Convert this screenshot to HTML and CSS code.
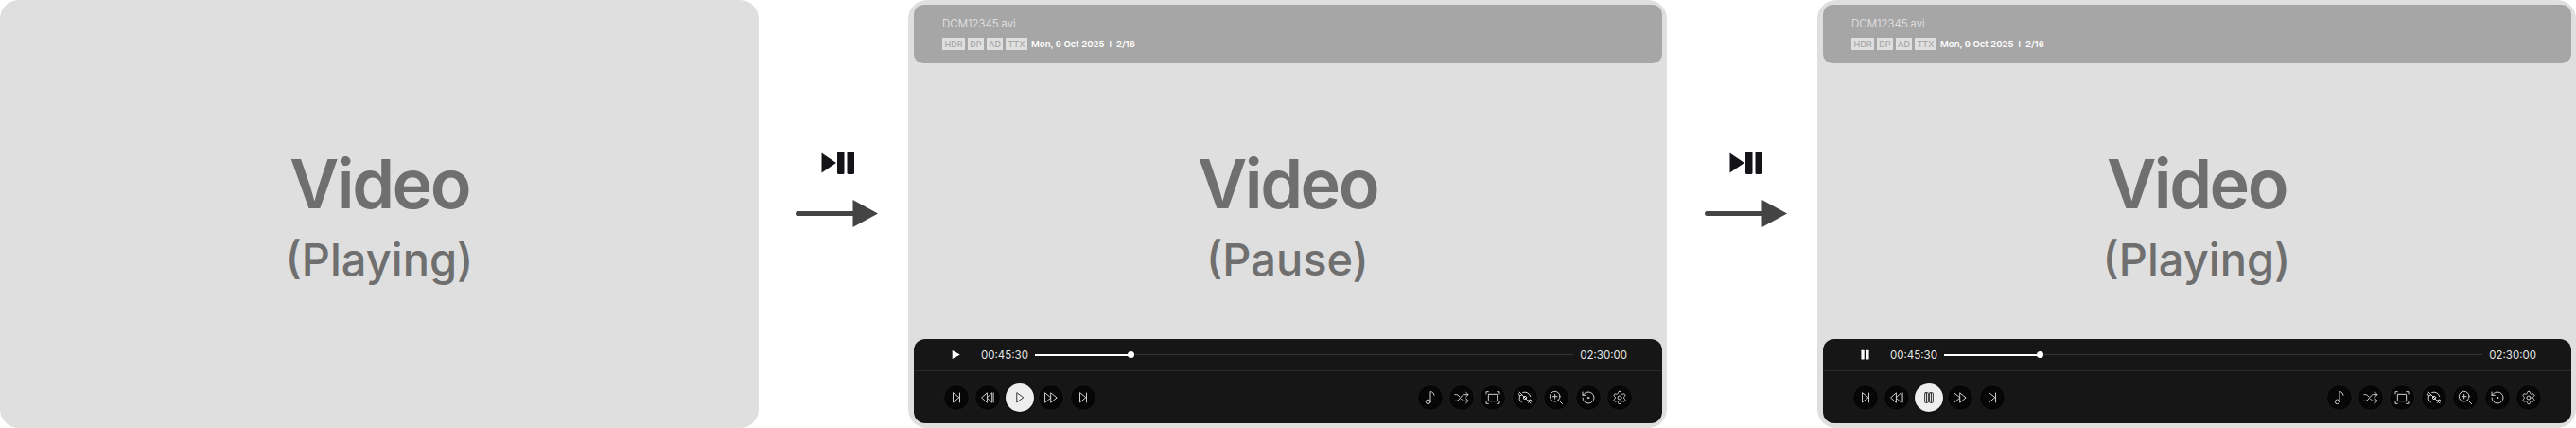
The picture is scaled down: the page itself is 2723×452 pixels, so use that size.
FILE: index.html
```html
<!DOCTYPE html>
<html lang="en">
<head>
<meta charset="utf-8">
<title>Video player states</title>
<link rel="stylesheet" href="styles.css">
</head>
<body>
<svg class="defs" width="0" height="0" aria-hidden="true">
  <symbol id="i-skip" viewBox="0 0 24 24"><path d="M6 3.500v17L16.500 12zM18 3.500v17"/></symbol>
  <symbol id="i-rew" viewBox="0 0 24 24"><path d="M10.500 3.500 1 12l9.500 8.500zM19.500 3.500 10.500 12l9 8.500zM22.500 3.500v17"/></symbol>
  <symbol id="i-fwd" viewBox="0 0 24 24"><path d="M1.500 3.500 12 12 1.500 20.500zM12 3.500 22.500 12 12 20.500z"/></symbol>
  <symbol id="i-play" viewBox="0 0 24 24"><path d="M6.500 3.500v17L18 12z"/></symbol>
  <symbol id="i-pause" viewBox="0 0 24 24"><rect x="4.500" y="3" width="6.500" height="18" rx="1"/><rect x="13" y="3" width="6.500" height="18" rx="1"/><path d="M7.750 3v18M16.250 3v18"/></symbol>
  <symbol id="i-music" viewBox="0 0 24 24"><circle cx="8.500" cy="18.500" r="3.500"/><path d="M12 18.500V2.500c3.500 0 5.500 2.200 6 5.500"/></symbol>
  <symbol id="i-shuffle" viewBox="0 0 24 24"><path d="m19 13.500 3.500 3.500-3.500 3.500M19 3.500 22.500 7 19 10.500M1.500 17h2.500a4 4 0 0 0 3.300-1.700l5.400-6.600A4 4 0 0 1 16 7h6.500M1.500 7H4a4 4 0 0 1 3.300 1.700l1.200 1.500M22.500 17H16a4 4 0 0 1-3.300-1.700l-1.200-1.500"/></symbol>
  <symbol id="i-fit" viewBox="0 0 24 24"><path d="M1.500 6V2.500H5M19 2.500h3.500V6M22.500 18v3.500H19M5 21.500H1.500V18"/><rect x="5" y="6.500" width="14" height="11" rx="1"/></symbol>
  <symbol id="i-rotoff" viewBox="0 0 24 24"><path d="M3 3l18 18M3.500 9a9 9 0 0 0 3 10.500M8.500 3.700A9 9 0 0 1 20.700 10M21 15.500a9 9 0 0 1-4 4.500M2 5.500 3.500 9 7 7.500M22 18.500 21 15l-3.500 1"/><circle cx="12" cy="12" r="2.500"/></symbol>
  <symbol id="i-zoom" viewBox="0 0 24 24"><circle cx="10" cy="10" r="8"/><path d="m22 22-6.300-6.300M10 6.500v7M6.500 10h7"/></symbol>
  <symbol id="i-reset" viewBox="0 0 24 24"><path d="M3 12a9 9 0 1 0 9-9 9.750 9.750 0 0 0-6.740 2.740L3 8M3 3v5h5"/><circle cx="12" cy="12" r="1.200"/></symbol>
  <symbol id="i-gear" viewBox="0 0 24 24"><path d="M12.220 2h-.44a2 2 0 0 0-2 2v.18a2 2 0 0 1-1 1.730l-.43.250a2 2 0 0 1-2 0l-.15-.08a2 2 0 0 0-2.730.730l-.22.380a2 2 0 0 0 .730 2.730l.15.100a2 2 0 0 1 1 1.720v.510a2 2 0 0 1-1 1.740l-.15.090a2 2 0 0 0-.730 2.730l.22.380a2 2 0 0 0 2.730.730l.15-.08a2 2 0 0 1 2 0l.43.250a2 2 0 0 1 1 1.730V20a2 2 0 0 0 2 2h.44a2 2 0 0 0 2-2v-.18a2 2 0 0 1 1-1.730l.43-.250a2 2 0 0 1 2 0l.15.08a2 2 0 0 0 2.730-.730l.22-.390a2 2 0 0 0-.730-2.730l-.15-.08a2 2 0 0 1-1-1.740v-.5a2 2 0 0 1 1-1.740l.15-.090a2 2 0 0 0 .730-2.730l-.22-.380a2 2 0 0 0-2.730-.730l-.15.08a2 2 0 0 1-2 0l-.43-.250a2 2 0 0 1-1-1.730V4a2 2 0 0 0-2-2z"/><circle cx="12" cy="12" r="3"/></symbol>
</svg>

<main class="board">
  <section class="panel">
    <div class="stage"><div class="stage-title">Video</div><div class="stage-state">(Playing)</div></div>
  </section>

  <div class="step step-first">
    <svg class="step-icon" viewBox="0 0 36 24"><path d="M1.500 1.500v21L17 12z"/><rect x="18" width="7.500" height="24" rx="1.500"/><rect x="28.500" width="7.500" height="24" rx="1.500"/></svg>
    <svg class="step-arrow" viewBox="0 0 87 29"><path d="M2.500 12h58V0L87 14.500 60.500 29V17h-58a2.500 2.500 0 0 1 0-5z"/></svg>
  </div>

  <section class="panel">
    <div class="stage"><div class="stage-title">Video</div><div class="stage-state">(Pause)</div></div>
    <header class="info">
      <div class="info-name">DCM12345.avi</div>
      <div class="info-meta">
        <span class="tag tag-hdr">HDR</span><span class="tag">DP</span><span class="tag">AD</span><span class="tag tag-ttx">TTX</span>
        <span class="info-text">Mon, 9 Oct 2025</span><span class="info-sep">I</span><span class="info-text">2/16</span>
      </div>
    </header>
    <footer class="bar">
      <div class="bar-top">
        <svg class="mini-icon" viewBox="0 0 24 24"><path d="M5 3.500v17L20 12z"/></svg>
        <span class="time">00:45:30</span>
        <div class="track"><div class="track-fill"></div><div class="track-knob"></div></div>
        <span class="time">02:30:00</span>
      </div>
      <div class="bar-bottom">
        <div class="btns">
          <span class="btn"><svg><use href="#i-skip"/></svg></span>
          <span class="btn"><svg><use href="#i-rew"/></svg></span>
          <span class="btn btn-main"><svg><use href="#i-play"/></svg></span>
          <span class="btn"><svg><use href="#i-fwd"/></svg></span>
          <span class="btn"><svg><use href="#i-skip"/></svg></span>
        </div>
        <div class="btns btns-tools">
          <span class="btn"><svg><use href="#i-music"/></svg></span>
          <span class="btn"><svg><use href="#i-shuffle"/></svg></span>
          <span class="btn"><svg><use href="#i-fit"/></svg></span>
          <span class="btn"><svg><use href="#i-rotoff"/></svg></span>
          <span class="btn"><svg><use href="#i-zoom"/></svg></span>
          <span class="btn"><svg><use href="#i-reset"/></svg></span>
          <span class="btn"><svg><use href="#i-gear"/></svg></span>
        </div>
      </div>
    </footer>
  </section>

  <div class="step">
    <svg class="step-icon" viewBox="0 0 36 24"><path d="M1.500 1.500v21L17 12z"/><rect x="18" width="7.500" height="24" rx="1.500"/><rect x="28.500" width="7.500" height="24" rx="1.500"/></svg>
    <svg class="step-arrow" viewBox="0 0 87 29"><path d="M2.500 12h58V0L87 14.500 60.500 29V17h-58a2.500 2.500 0 0 1 0-5z"/></svg>
  </div>

  <section class="panel">
    <div class="stage"><div class="stage-title">Video</div><div class="stage-state">(Playing)</div></div>
    <header class="info">
      <div class="info-name">DCM12345.avi</div>
      <div class="info-meta">
        <span class="tag tag-hdr">HDR</span><span class="tag">DP</span><span class="tag">AD</span><span class="tag tag-ttx">TTX</span>
        <span class="info-text">Mon, 9 Oct 2025</span><span class="info-sep">I</span><span class="info-text">2/16</span>
      </div>
    </header>
    <footer class="bar">
      <div class="bar-top">
        <svg class="mini-icon" viewBox="0 0 24 24"><rect x="4.500" y="3" width="6" height="18" rx="1"/><rect x="13.500" y="3" width="6" height="18" rx="1"/></svg>
        <span class="time">00:45:30</span>
        <div class="track"><div class="track-fill"></div><div class="track-knob"></div></div>
        <span class="time">02:30:00</span>
      </div>
      <div class="bar-bottom">
        <div class="btns">
          <span class="btn"><svg><use href="#i-skip"/></svg></span>
          <span class="btn"><svg><use href="#i-rew"/></svg></span>
          <span class="btn btn-main"><svg><use href="#i-pause"/></svg></span>
          <span class="btn"><svg><use href="#i-fwd"/></svg></span>
          <span class="btn"><svg><use href="#i-skip"/></svg></span>
        </div>
        <div class="btns btns-tools">
          <span class="btn"><svg><use href="#i-music"/></svg></span>
          <span class="btn"><svg><use href="#i-shuffle"/></svg></span>
          <span class="btn"><svg><use href="#i-fit"/></svg></span>
          <span class="btn"><svg><use href="#i-rotoff"/></svg></span>
          <span class="btn"><svg><use href="#i-zoom"/></svg></span>
          <span class="btn"><svg><use href="#i-reset"/></svg></span>
          <span class="btn"><svg><use href="#i-gear"/></svg></span>
        </div>
      </div>
    </footer>
  </section>
</main>
</body>
</html>
```

FILE: styles.css
```css
* { box-sizing: border-box; }
html, body { margin: 0; padding: 0; background: #fff; }
body { width: 2723px; height: 452px; overflow: hidden; font-family: Inter, "Liberation Sans", sans-serif; }
.defs { position: absolute; }
.board { display: flex; height: 452px; }

.panel {
  position: relative;
  flex: 0 0 802px;
  height: 452px;
  background: #dfdfdf;
  border-radius: 20px;
  display: flex;
  align-items: center;
  justify-content: center;
}
.stage { padding-top: 4px; text-align: center; color: #6f6f6f; }
.stage-title { font-size: 72px; line-height: 80px; font-weight: 600; letter-spacing: -2.500px; }
.stage-state { font-size: 47px; line-height: 56px; font-weight: 500; margin-top: 12px; }

.step {
  flex: 0 0 159px;
  display: flex;
  flex-direction: column;
  align-items: center;
  gap: 27px;
  padding: 160px 0 0 7px;
}
.step-first { flex-basis: 158px; }
.step-icon { width: 36px; height: 24px; fill: #141418; }
.step-arrow { width: 87px; height: 29px; fill: #444; }

.info {
  position: absolute;
  left: 6px; right: 5px; top: 5px;
  height: 62px;
  padding: 13px 30px 0;
  background: #a6a6a6;
  border-radius: 10px;
}
.info-name { font-size: 11.500px; line-height: 14px; font-weight: 300; color: #e8e8e8; }
.info-meta { display: flex; align-items: center; gap: 3px; margin-top: 8px; height: 13px; }
.tag {
  flex: 0 0 17px;
  height: 13px;
  background: #dfdfdf;
  color: #a8a8a8;
  font-size: 9px;
  line-height: 13px;
  font-weight: 500;
  text-align: center;
}
.tag-hdr { flex-basis: 24px; }
.tag-ttx { flex-basis: 23px; }
.info-text { margin-left: 1px; font-size: 9.600px; line-height: 13px; font-weight: 600; color: #fff; white-space: nowrap; }
.info-sep { margin: 0 1px 0 2px; font-size: 9px; line-height: 13px; font-weight: 600; color: #fff; }

.bar {
  position: absolute;
  left: 6px; right: 5px; top: 358px;
  height: 89px;
  background: #161616;
  border-radius: 12px;
  color: #e4e4e4;
}
.bar-top {
  height: 34px;
  display: flex;
  align-items: center;
  padding: 0 37px 0 38px;
  border-bottom: 1.5px solid #2a2a2a;
}
.mini-icon { width: 13px; height: 13px; fill: #fff; margin-right: 20px; flex: none; }
.time { font-size: 11.500px; line-height: 16px; font-weight: 400; flex: none; }
.track { position: relative; flex: 1; height: 1px; margin: 0 7px; background: #333; }
.track-fill { position: absolute; left: 0; top: -0.5px; width: 102px; height: 2px; background: #fff; }
.track-knob { position: absolute; left: 98px; top: -3px; width: 7px; height: 7px; border-radius: 50%; background: #fff; }

.bar-bottom {
  height: 55px;
  display: flex;
  align-items: center;
  justify-content: space-between;
  padding: 1px 31px 0;
}
.btns { display: flex; align-items: center; gap: 5.400px; }
.btn {
  width: 28px;
  height: 28px;
  border-radius: 50%;
  background: #060606;
  border: 1px solid #1d1d1d;
  display: flex;
  align-items: center;
  justify-content: center;
  flex: none;
}
.btn svg { width: 14px; height: 14px; fill: none; stroke: #cfcfcf; stroke-width: 1.700; stroke-linecap: round; stroke-linejoin: round; overflow: visible; }
.btns-tools .btn svg { width: 16px; height: 16px; stroke-width: 1.500; }
.btn-main {
  width: 30px;
  height: 30px;
  margin: 0 -1px;
  background: #eeeeee;
  border: 0;
  box-shadow: 0 1px 3px rgba(0,0,0,.5);
}
.btn-main svg { stroke: #333; }
```
